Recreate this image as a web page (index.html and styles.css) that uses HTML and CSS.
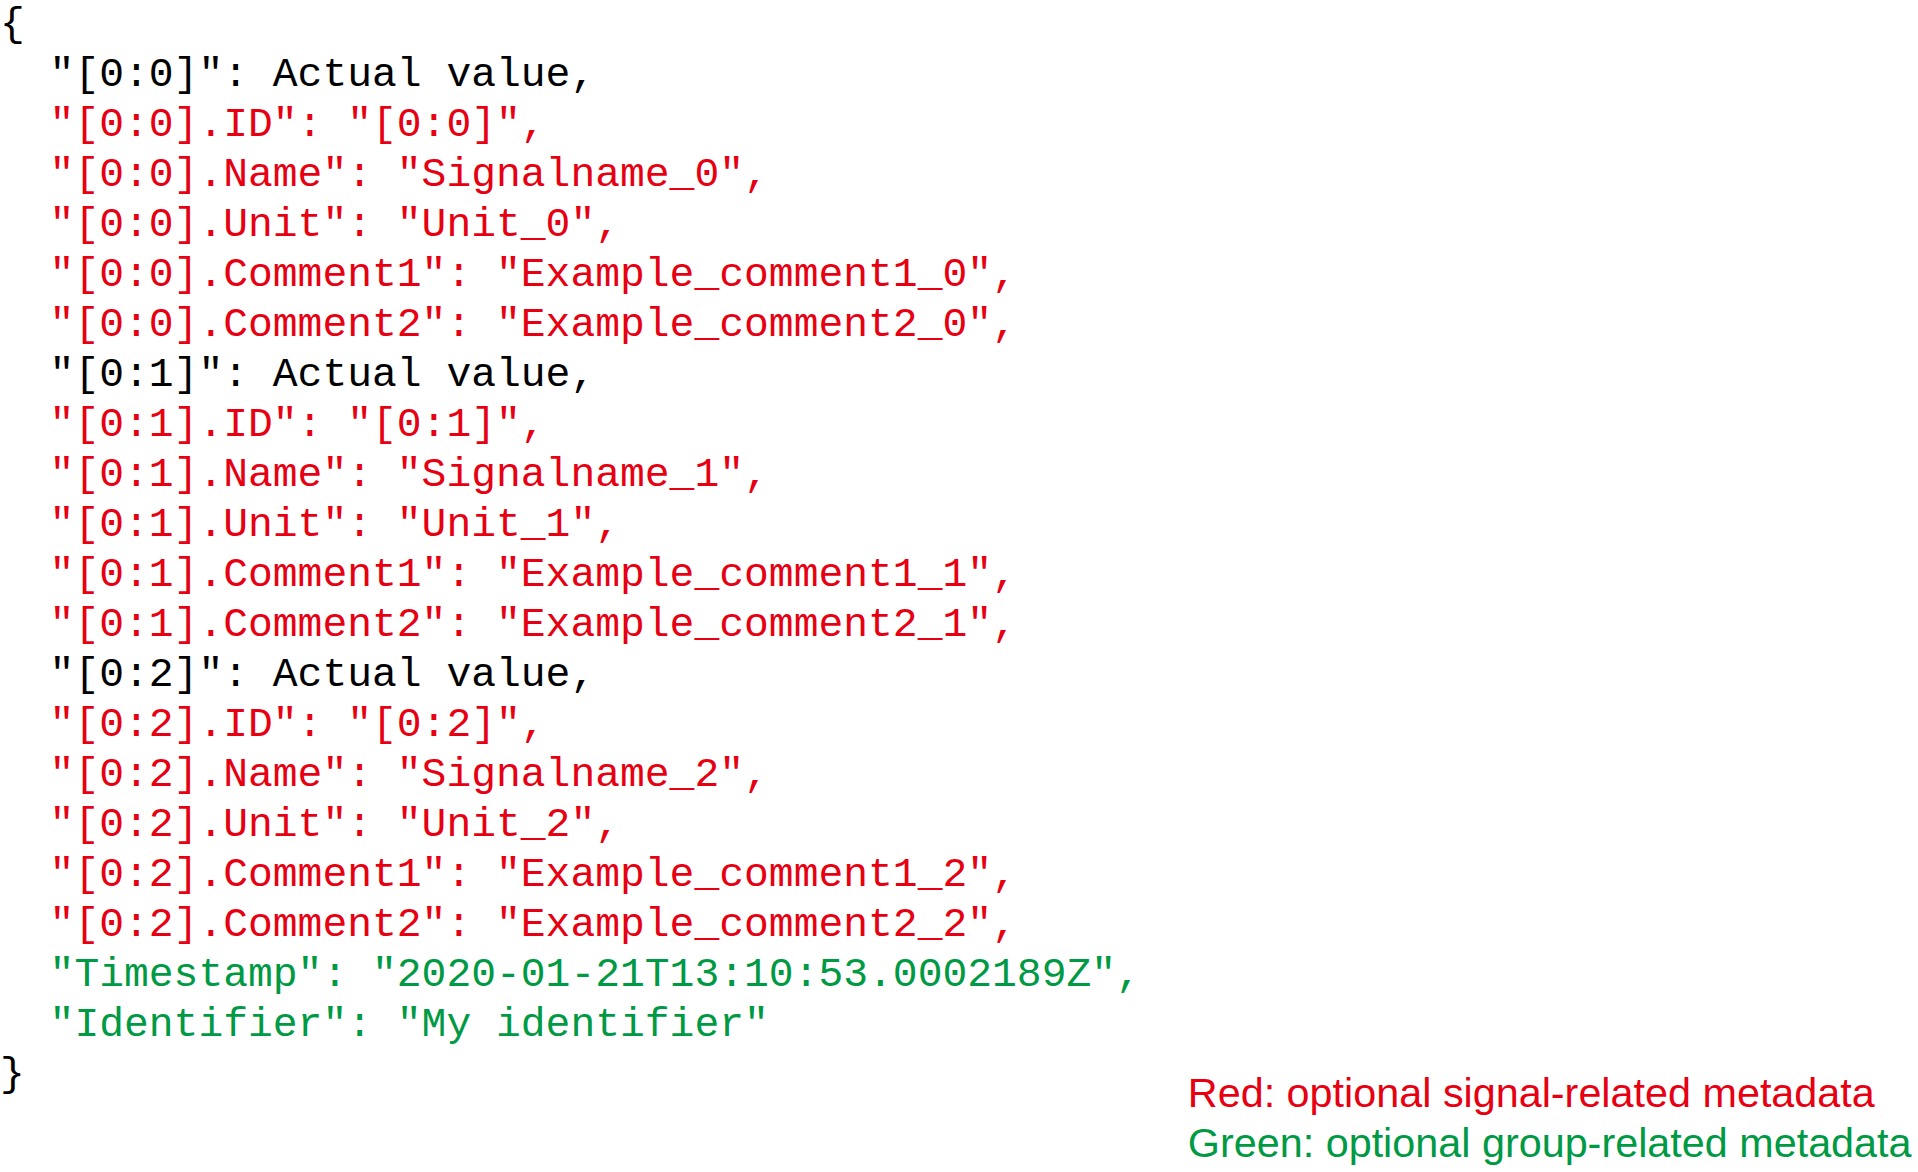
FILE: index.html
```html
<!DOCTYPE html>
<html>
<head>
<meta charset="utf-8">
<link rel="stylesheet" href="styles.css">
</head>
<body>
<div class="page">
<pre class="code"><span class="k">{</span>
<span class="k">  "[0:0]": Actual value,</span>
<span class="r">  "[0:0].ID": "[0:0]",</span>
<span class="r">  "[0:0].Name": "Signalname_0",</span>
<span class="r">  "[0:0].Unit": "Unit_0",</span>
<span class="r">  "[0:0].Comment1": "Example_comment1_0",</span>
<span class="r">  "[0:0].Comment2": "Example_comment2_0",</span>
<span class="k">  "[0:1]": Actual value,</span>
<span class="r">  "[0:1].ID": "[0:1]",</span>
<span class="r">  "[0:1].Name": "Signalname_1",</span>
<span class="r">  "[0:1].Unit": "Unit_1",</span>
<span class="r">  "[0:1].Comment1": "Example_comment1_1",</span>
<span class="r">  "[0:1].Comment2": "Example_comment2_1",</span>
<span class="k">  "[0:2]": Actual value,</span>
<span class="r">  "[0:2].ID": "[0:2]",</span>
<span class="r">  "[0:2].Name": "Signalname_2",</span>
<span class="r">  "[0:2].Unit": "Unit_2",</span>
<span class="r">  "[0:2].Comment1": "Example_comment1_2",</span>
<span class="r">  "[0:2].Comment2": "Example_comment2_2",</span>
<span class="g">  "Timestamp": "2020-01-21T13:10:53.0002189Z",</span>
<span class="g">  "Identifier": "My identifier"</span>
<span class="k">}</span></pre>
<div class="legend">
<div class="r">Red: optional signal-related metadata</div>
<div class="g">Green: optional group-related metadata</div>
</div>
</div>
</body>
</html>
```
FILE: styles.css
```css
html, body {
  margin: 0;
  padding: 0;
  background: #ffffff;
}
.page {
  display: flex;
  gap: 47px;
  height: 1172px;
  overflow: hidden;
}
.code {
  margin: 0;
  font-family: "Liberation Mono", "Courier New", monospace;
  font-size: 41.33px;
  line-height: 50px;
  white-space: pre;
}
.legend {
  align-self: flex-end;
  padding-bottom: 4px;
  font-family: "Liberation Sans", Arial, sans-serif;
  font-size: 41.33px;
  line-height: 50px;
  white-space: nowrap;
}
.k { color: #000000; }
.r { color: #e60012; }
.g { color: #009944; }
```
